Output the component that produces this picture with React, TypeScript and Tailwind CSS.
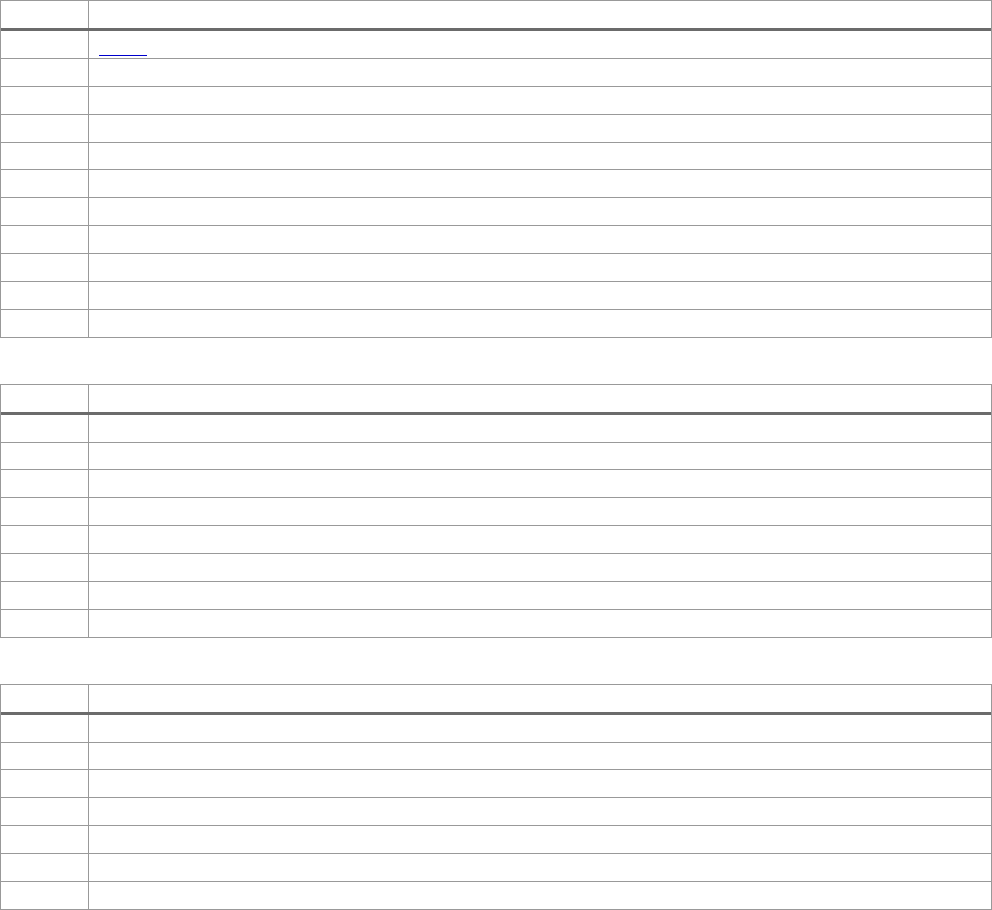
import React from "react";

function Table({ rows, link }: { rows: number; link?: boolean }) {
  return (
    <div className="w-[992px] border border-[#999999] bg-white">
      <div className="flex h-[30px] border-b-[3px] border-[#6b6b6b]">
        <div className="w-[88px] border-r border-[#999999]" />
        <div className="flex-1" />
      </div>
      {Array.from({ length: rows }).map((_, i) => (
        <div
          key={i}
          className={
            i < rows - 1
              ? "flex h-[27.875px] border-b border-[#999999]"
              : "flex h-[26.875px]"
          }
        >
          <div className="w-[88px] border-r border-[#999999]" />
          <div className="flex-1 flex items-end pl-[10px] pb-[2px]">
            {link && i === 0 ? (
              <a href="#" className="block w-[48px] h-px bg-[#0000cc]" aria-label="link" />
            ) : null}
          </div>
        </div>
      ))}
    </div>
  );
}

export default function App() {
  return (
    <div className="bg-white w-[992px] h-[910px] flex flex-col gap-[46px] font-['Liberation_Sans',sans-serif]">
      <Table rows={11} link />
      <Table rows={8} />
      <Table rows={7} />
    </div>
  );
}
